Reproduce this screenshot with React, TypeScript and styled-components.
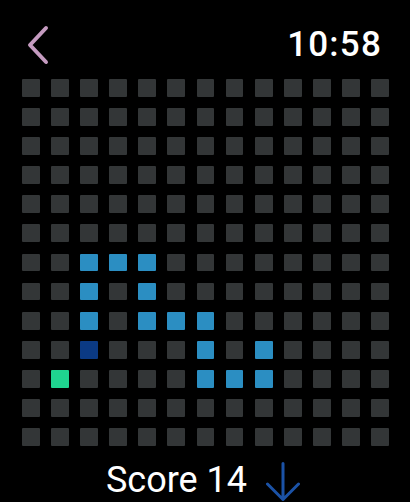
import React from 'react';
import styled, { createGlobalStyle } from 'styled-components';

const GlobalStyle = createGlobalStyle`
  html, body {
    margin: 0;
    padding: 0;
    background: #000;
    width: 410px;
    height: 502px;
    overflow: hidden;
  }
  body {
    font-family: Roboto, "Liberation Sans", sans-serif;
    color: #fff;
  }
`;

const Screen = styled.div`
  width: 410px;
  height: 502px;
  display: flex;
  flex-direction: column;
  background: #000;
`;

const Header = styled.div`
  height: 79px;
  display: flex;
  justify-content: space-between;
  align-items: flex-start;
  padding: 0 28px 0 26px;
  box-sizing: border-box;
`;

const BackButton = styled.button`
  background: transparent;
  border: none;
  padding: 0;
  margin-top: 25px;
  width: 26px;
  height: 40px;
  cursor: pointer;
`;

const Clock = styled.div`
  font-size: 35px;
  font-weight: 500;
  letter-spacing: 1.2px;
  line-height: 1;
  margin-top: 27px;
`;

const Board = styled.div`
  display: grid;
  grid-template-columns: repeat(13, 17.8px);
  grid-auto-rows: 17.8px;
  column-gap: 11.3px;
  row-gap: 11.3px;
  padding-left: 22px;
`;

const Cell = styled.div<{ kind: string }>`
  border-radius: 1px;
  background: ${({ kind }) =>
    kind === 'snake'
      ? '#2b8ec2'
      : kind === 'head'
      ? '#0b3a84'
      : kind === 'food'
      ? '#1fd490'
      : '#333637'};
`;

const Footer = styled.div`
  flex: 1;
  display: flex;
  align-items: flex-start;
  justify-content: center;
  gap: 19px;
  padding-top: 16px;
  padding-right: 4px;
`;

const Score = styled.div`
  font-size: 36px;
  font-weight: 400;
  letter-spacing: 0;
  line-height: 1;
`;

const ArrowIcon = styled.svg`
  width: 34px;
  height: 40px;
  flex-shrink: 0;
`;

const snake: Record<string, string> = {
  '6,2': 'snake', '6,3': 'snake', '6,4': 'snake',
  '7,2': 'snake', '7,4': 'snake',
  '8,2': 'snake', '8,4': 'snake', '8,5': 'snake', '8,6': 'snake',
  '9,2': 'head', '9,6': 'snake', '9,8': 'snake',
  '10,1': 'food', '10,6': 'snake', '10,7': 'snake', '10,8': 'snake',
};

export default function App() {
  const cells = [];
  for (let r = 0; r < 13; r++) {
    for (let c = 0; c < 13; c++) {
      cells.push(<Cell key={`${r}-${c}`} kind={snake[`${r},${c}`] || 'empty'} />);
    }
  }

  return (
    <Screen>
      <GlobalStyle />
      <Header>
        <BackButton aria-label="Back">
          <svg width="26" height="40" viewBox="0 0 26 40" fill="none">
            <path
              d="M20 3 L4 20 L20 37"
              stroke="#c59bc0"
              strokeWidth="4"
              strokeLinecap="round"
              strokeLinejoin="round"
            />
          </svg>
        </BackButton>
        <Clock>10:58</Clock>
      </Header>
      <Board>{cells}</Board>
      <Footer>
        <Score>Score 14</Score>
        <ArrowIcon viewBox="0 0 34 40" fill="none">
          <path
            d="M17 1.5 V37.5 M1.5 22 L17 37.5 L32.5 22"
            stroke="#1b52a6"
            strokeWidth="3"
            strokeLinecap="round"
            strokeLinejoin="round"
          />
        </ArrowIcon>
      </Footer>
    </Screen>
  );
}
